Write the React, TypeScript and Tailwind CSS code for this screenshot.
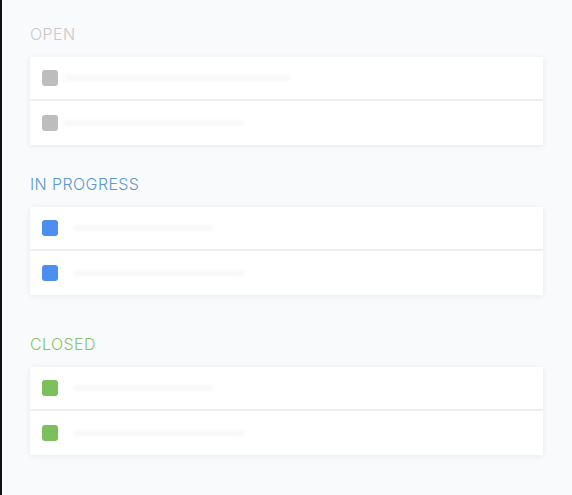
const sections = [
  {
    title: "OPEN",
    titleClass: "text-[#c9c9c9]",
    boxClass: "bg-[#bdbdbd]",
    gapTop: "mt-0",
    bars: [
      { ml: "ml-[6px]", w: "w-[226px]" },
      { ml: "ml-[6px]", w: "w-[180px]" },
    ],
  },
  {
    title: "IN PROGRESS",
    titleClass: "text-[#5b97d3]",
    boxClass: "bg-[#4d8ff0]",
    gapTop: "mt-[29px]",
    bars: [
      { ml: "ml-[15px]", w: "w-[140px]" },
      { ml: "ml-[15px]", w: "w-[172px]" },
    ],
  },
  {
    title: "CLOSED",
    titleClass: "text-[#88c467]",
    boxClass: "bg-[#7cc05b]",
    gapTop: "mt-[39px]",
    bars: [
      { ml: "ml-[15px]", w: "w-[140px]" },
      { ml: "ml-[15px]", w: "w-[172px]" },
    ],
  },
];

function Row({ boxClass, bar, last }: { boxClass: string; bar: { ml: string; w: string }; last: boolean }) {
  return (
    <div
      className={
        "flex h-[44px] items-center bg-white pl-3 " +
        (last ? "" : "border-b-2 border-[#eceef0]")
      }
    >
      <div className={"h-[16px] w-[16px] rounded-[3px] " + boxClass} />
      <div className={"h-[6px] rounded-full bg-[#f7f8fa] blur-[1.5px] " + bar.ml + " " + bar.w} />
    </div>
  );
}

export default function App() {
  return (
    <div className="flex h-[495px] w-[572px] bg-[#f9fafc] font-['Inter',sans-serif]">
      <div className="w-[2px] shrink-0 bg-[#111]" />
      <div className="flex flex-1 flex-col pl-[28px] pt-[24px]">
        {sections.map((s) => (
          <div key={s.title} className={s.gapTop}>
            <div className={"h-[20px] text-[16px] font-light leading-[20px] tracking-[0.4px] " + s.titleClass}>
              {s.title}
            </div>
            <div className="mt-[13px] w-[513px] shadow-[0_1px_6px_rgba(0,0,0,0.08)]">
              {s.bars.map((b, i) => (
                <Row key={i} boxClass={s.boxClass} bar={b} last={i === s.bars.length - 1} />
              ))}
            </div>
          </div>
        ))}
      </div>
    </div>
  );
}
